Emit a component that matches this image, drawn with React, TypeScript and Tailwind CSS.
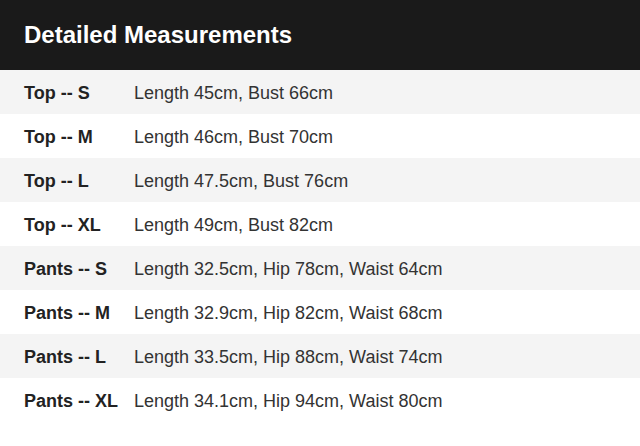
const rows = [
  ["Top -- S", "Length 45cm, Bust 66cm"],
  ["Top -- M", "Length 46cm, Bust 70cm"],
  ["Top -- L", "Length 47.5cm, Bust 76cm"],
  ["Top -- XL", "Length 49cm, Bust 82cm"],
  ["Pants -- S", "Length 32.5cm, Hip 78cm, Waist 64cm"],
  ["Pants -- M", "Length 32.9cm, Hip 82cm, Waist 68cm"],
  ["Pants -- L", "Length 33.5cm, Hip 88cm, Waist 74cm"],
  ["Pants -- XL", "Length 34.1cm, Hip 94cm, Waist 80cm"],
];

export default function App() {
  return (
    <div className="w-[640px] h-[446px] bg-white font-['Liberation_Sans',Arial,sans-serif]">
      {/* Header */}
      <div className="h-[70px] bg-[#1a1a1a] flex items-center px-6">
        <h1 className="text-[24px] font-bold text-white">Detailed Measurements</h1>
      </div>

      {/* Rows */}
      <div>
        {rows.map(([label, value], i) => (
          <div
            key={label}
            className={`h-[44px] flex items-center px-6 pt-[2px] text-[18px] text-[#222] ${
              i % 2 === 0 ? "bg-[#f4f4f4]" : "bg-white"
            }`}
          >
            <span className="w-[110px] shrink-0 font-bold">{label}</span>
            <span className="text-[#333]">{value}</span>
          </div>
        ))}
      </div>
    </div>
  );
}
